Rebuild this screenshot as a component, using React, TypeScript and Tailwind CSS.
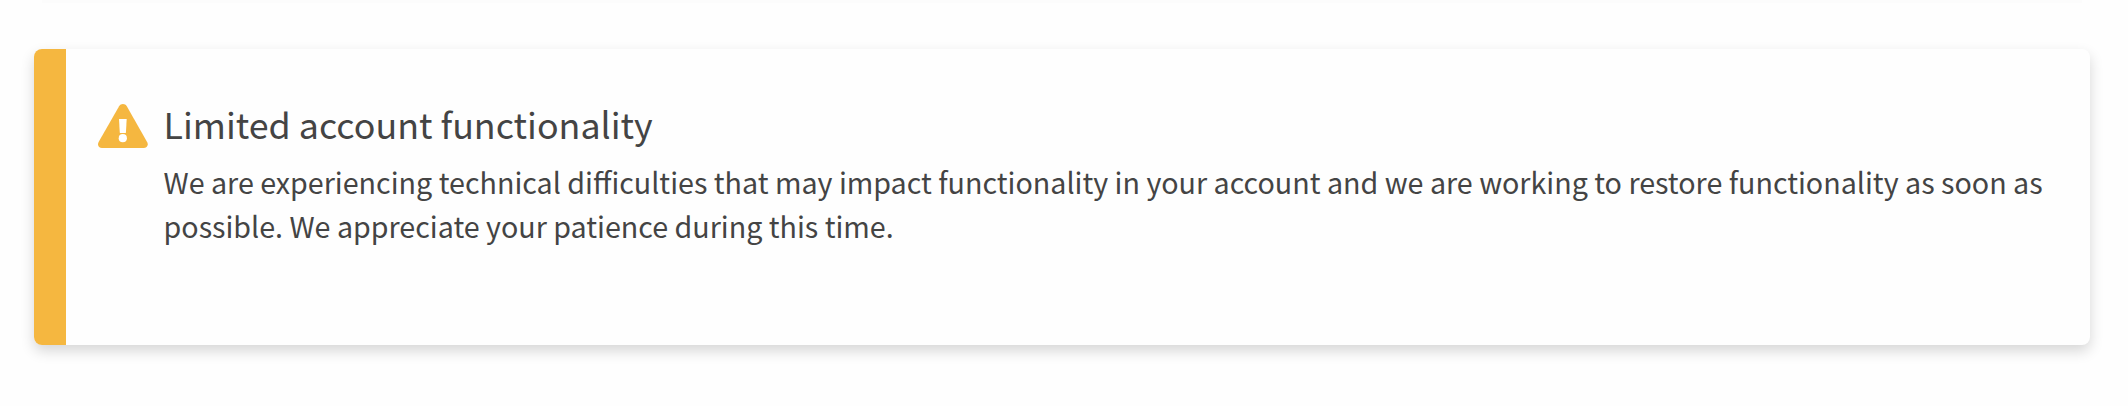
export default function App() {
  return (
    <div className="h-[406px] w-full overflow-hidden bg-[#fefefe] pl-[34px] font-['Noto_Sans_CJK_SC',sans-serif] text-[#444]">
      <div className="ml-2 h-[3px] w-[2040px] bg-[#fcfcfc]" />
      <section className="mt-[46px] flex h-[296px] w-[2056px] rounded-lg bg-[#fefefe] shadow-[0_6px_14px_rgba(0,0,0,0.16)]">
        <div className="w-8 shrink-0 rounded-l-lg bg-[#f5b740]" />
        <div className="flex pt-[53px] pl-8">
          <svg className="mt-[2px] h-[44px] w-[50px] shrink-0" viewBox="0 0 50 44">
            <path d="M21.1 2.2C22.8-.7 27.1-.7 28.8 2.2L49.1 38C50.8 41 48.8 44 45.6 44H4C.8 44-1 41 .6 38Z" fill="#f5b740" />
            <path d="M21 15.1H28.7L27.9 28.7Q27.8 29 27.4 29H22.3Q21.9 29 21.8 28.7Z" fill="white" />
            <circle cx="24.8" cy="34.2" r="4.1" fill="white" />
          </svg>
          <div className="ml-[15.5px]">
            <h1 className="-mt-[3px] text-[35.8px] leading-[48px] whitespace-nowrap">Limited account functionality</h1>
            <p className="mt-[13px] text-[28.66px] leading-[44px] whitespace-nowrap">
              We are experiencing technical difficulties that may impact functionality in your account and we are working to restore functionality as soon as
              <br />
              possible. We appreciate your patience during this time.
            </p>
          </div>
        </div>
      </section>
    </div>
  );
}
